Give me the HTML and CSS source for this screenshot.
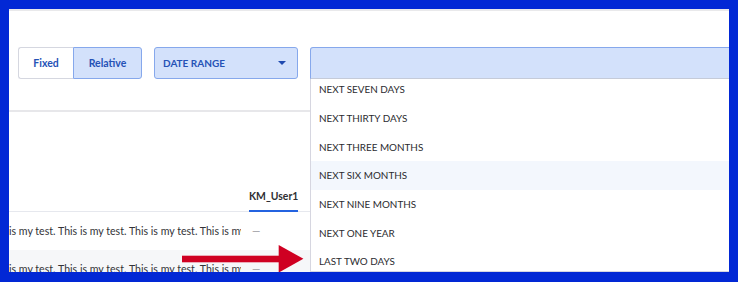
FILE: index.html
```html
<!DOCTYPE html>
<html lang="en">
<head>
<meta charset="utf-8">
<title>Date range</title>
<link rel="stylesheet" href="styles.css">
</head>
<body>
<div class="frame">
  <div class="screen">
    <div class="topline"></div>
    <div class="toolbar">
      <div class="segmented">
        <button class="seg seg-first">Fixed</button>
        <button class="seg seg-last seg-active">Relative</button>
      </div>
      <div class="select">
        <span>DATE RANGE</span>
        <span class="caret"></span>
      </div>
      <div class="combo"></div>
    </div>
    <div class="divider"></div>
    <div class="table">
      <div class="thead">
        <div class="cell-text"></div>
        <div class="cell-user"><span class="tab">KM_User1</span></div>
      </div>
      <div class="trow">
        <div class="cell-text">is my test. This is my test. This is my test. This is my</div>
        <div class="cell-user dash">—</div>
      </div>
      <div class="trow trow-alt">
        <div class="cell-text">is my test. This is my test. This is my test. This is my</div>
        <div class="cell-user dash">—</div>
      </div>
    </div>
    <div class="menu">
      <ul class="menu-list">
        <li class="menu-item">NEXT SEVEN DAYS</li>
        <li class="menu-item">NEXT THIRTY DAYS</li>
        <li class="menu-item">NEXT THREE MONTHS</li>
        <li class="menu-item menu-item-hover">NEXT SIX MONTHS</li>
        <li class="menu-item">NEXT NINE MONTHS</li>
        <li class="menu-item">NEXT ONE YEAR</li>
        <li class="menu-item">LAST TWO DAYS</li>
      </ul>
    </div>
    <svg class="arrow" width="300" height="263" viewBox="0 0 300 263" aria-hidden="true">
      <rect x="173" y="246.7" width="98" height="6.6" fill="#cf0022"/>
      <polygon points="269.7,236 294.4,249.8 269.7,263.6" fill="#cf0022"/>
    </svg>
  </div>
</div>
</body>
</html>
```
FILE: styles.css
```css
* { box-sizing: border-box; }
html, body { margin: 0; padding: 0; background: #0228d5; }
body { font-family: Lato, "Noto Sans", sans-serif; }

.frame {
  width: 738px;
  height: 282px;
  border: 9px solid #0228d5;
  border-bottom-width: 10px;
}

.screen {
  position: relative;
  width: 720px;
  height: 263px;
  background: #ffffff;
  overflow: hidden;
}

.topline { height: 2px; background: #e9e9eb; }

.toolbar {
  display: flex;
  align-items: stretch;
  height: 32px;
  margin-top: 36px;
  padding-left: 9px;
  gap: 12px;
}

.segmented { display: flex; }

.seg {
  font-family: inherit;
  font-size: 10.5px;
  font-weight: 700;
  color: #2552b6;
  background: #ffffff;
  border: 1px solid #d5d7e0;
  height: 32px;
  padding: 0;
  margin: 0;
}
.seg-first { width: 55px; border-radius: 3px 0 0 3px; border-right: 0; }
.seg-last { width: 69px; border-radius: 0 3px 3px 0; }
.seg-active { background: #d3e1fb; border-color: #86a8ec; }

.select {
  width: 144px;
  display: flex;
  align-items: center;
  justify-content: space-between;
  padding: 0 8px 0 8px;
  background: #d3e1fb;
  border: 1px solid #86a8ec;
  border-radius: 3px;
  font-size: 10px;
  font-weight: 700;
  color: #2552b6;
}

.caret {
  width: 0;
  height: 0;
  border-left: 4px solid transparent;
  border-right: 4px solid transparent;
  border-top: 4px solid #1f4ab0;
  margin-right: 3px;
}

.combo {
  flex: 1;
  margin-right: -10px;
  background: #d3e1fb;
  border: 1px solid #86a8ec;
  border-bottom-color: #c5cbd9;
  border-radius: 3px 0 0 0;
}

.divider {
  height: 2px;
  margin-top: 31px;
  background: #e7e7ea;
}

.thead {
  display: flex;
  height: 100px;
  border-bottom: 1px solid #e6e8ee;
}
.thead .cell-user {
  display: flex;
  align-items: flex-end;
}
.tab {
  display: block;
  font-size: 10.4px;
  font-weight: 700;
  color: #2f2f33;
  padding-bottom: 8px;
  margin-bottom: -1px;
  border-bottom: 2px solid #2463e0;
}

.trow {
  display: flex;
  height: 38px;
  align-items: center;
  font-size: 10.6px;
  color: #333338;
}
.trow-alt { background: #f6f7f9; }

.cell-text {
  width: 232px;
  overflow: hidden;
  white-space: nowrap;
}
.thead .cell-text { height: 100%; }
.cell-user { margin-left: 8px; }
.dash { color: #9a9aa0; padding-left: 3px; }

.menu {
  position: absolute;
  left: 301px;
  top: 70px;
  width: 430px;
  height: 193px;
  background: #ffffff;
  border-left: 1px solid #d6d6e0;
  border-bottom: 1px solid #d6d6e0;
  overflow: hidden;
}

.menu-list {
  list-style: none;
  margin: -4px 0 0 0;
  padding: 0;
}

.menu-item {
  height: 28.67px;
  display: flex;
  align-items: center;
  padding-left: 8px;
  font-size: 9.9px;
  color: #2b2b2f;
}
.menu-item-hover { background: #f3f7fd; }

.arrow {
  position: absolute;
  left: 0;
  top: 0;
}
```
